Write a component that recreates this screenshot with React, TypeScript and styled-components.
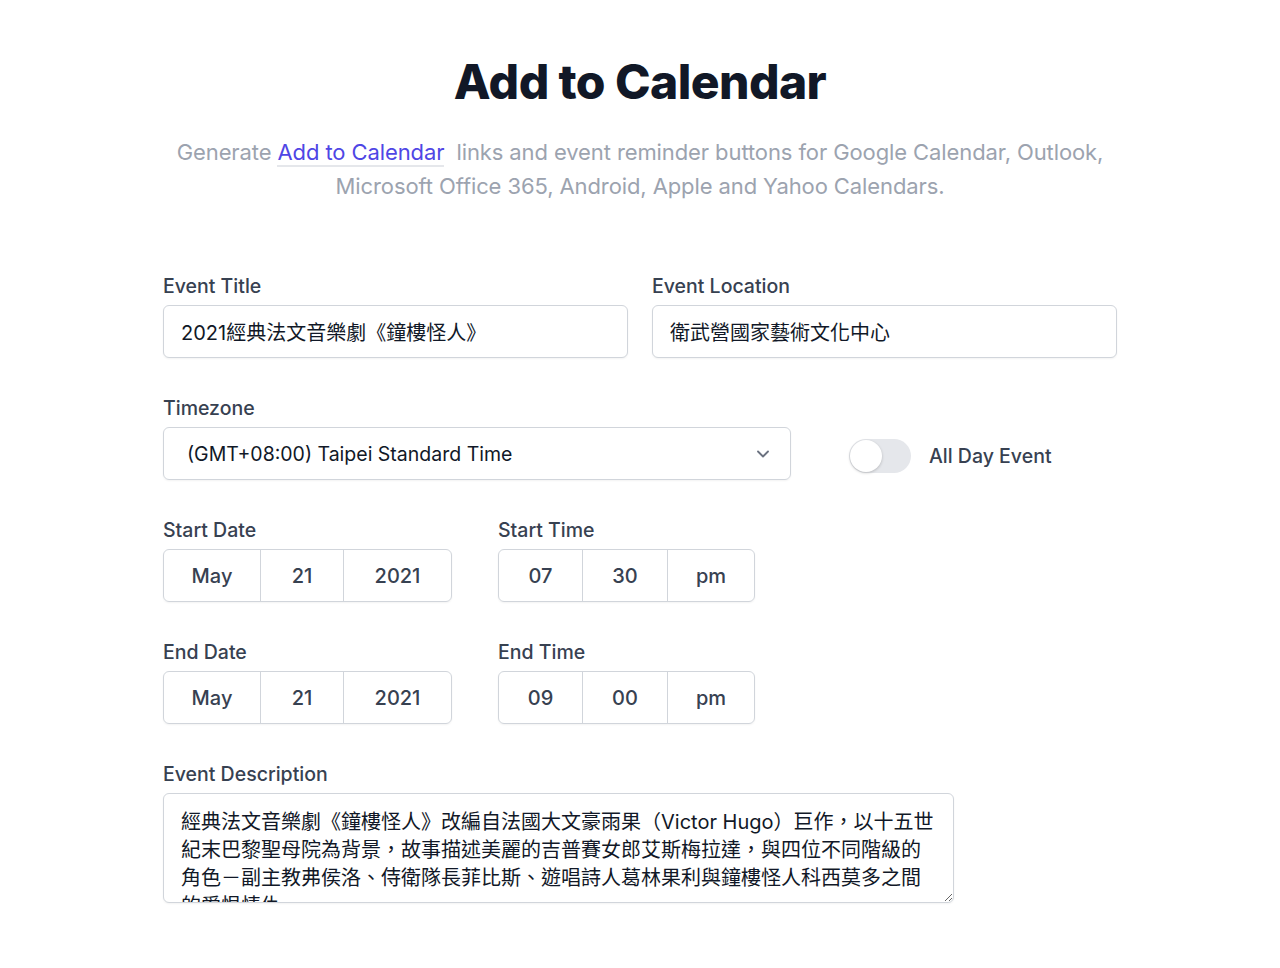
import styled, { createGlobalStyle } from 'styled-components';

const GlobalStyle = createGlobalStyle`
  body {
    margin: 0;
    background: #ffffff;
    font-family: Inter, "Noto Sans CJK TC", sans-serif;
    -webkit-font-smoothing: antialiased;
  }
`;

const description =
  '經典法文音樂劇《鐘樓怪人》改編自法國大文豪雨果（Victor Hugo）巨作，以十五世紀末巴黎聖母院為背景，故事描述美麗的吉普賽女郎艾斯梅拉達，與四位不同階級的角色－副主教弗侯洛、侍衛隊長菲比斯、遊唱詩人葛林果利與鐘樓怪人科西莫多之間的愛恨情仇。';

type Part = { value: string; width: number };

const dateParts: Part[] = [
  { value: 'May', width: 96 },
  { value: '21', width: 83 },
  { value: '2021', width: 108 },
];
const startTime: Part[] = [
  { value: '07', width: 83 },
  { value: '30', width: 85 },
  { value: 'pm', width: 87 },
];
const endTime: Part[] = [
  { value: '09', width: 83 },
  { value: '00', width: 85 },
  { value: 'pm', width: 87 },
];

const SegmentGroup = ({ parts }: { parts: Part[] }) => (
  <Segments>
    {parts.map((p, idx) => (
      <Segment key={idx} $width={p.width}>
        {p.value}
      </Segment>
    ))}
  </Segments>
);

const App = () => {
  return (
    <>
      <GlobalStyle />
      <Page>
        <Header>
          <Title>Add to Calendar</Title>
          <Subtitle>
            Generate <Link href="#">Add to Calendar</Link> links and event reminder buttons for
            Google Calendar, Outlook, Microsoft Office 365, Android, Apple and Yahoo Calendars.
          </Subtitle>
        </Header>

        <Form>
          <TwoCols>
            <Field>
              <Label>Event Title</Label>
              <TextInput defaultValue="2021經典法文音樂劇《鐘樓怪人》" />
            </Field>
            <Field>
              <Label>Event Location</Label>
              <TextInput defaultValue="衛武營國家藝術文化中心" />
            </Field>
          </TwoCols>

          <ZoneRow>
            <Field>
              <Label>Timezone</Label>
              <Select>
                <span>(GMT+08:00) Taipei Standard Time</span>
                <svg width="20" height="20" viewBox="0 0 24 24" fill="none" stroke="#6b7280" strokeWidth="2.2" strokeLinecap="round" strokeLinejoin="round">
                  <path d="M6 9l6 6 6-6" />
                </svg>
              </Select>
            </Field>
            <ToggleWrap>
              <Toggle>
                <Knob />
              </Toggle>
              <ToggleLabel>All Day Event</ToggleLabel>
            </ToggleWrap>
          </ZoneRow>

          <DateRow>
            <Field>
              <Label>Start Date</Label>
              <SegmentGroup parts={dateParts} />
            </Field>
            <Field>
              <Label>Start Time</Label>
              <SegmentGroup parts={startTime} />
            </Field>
          </DateRow>

          <DateRow>
            <Field>
              <Label>End Date</Label>
              <SegmentGroup parts={dateParts} />
            </Field>
            <Field>
              <Label>End Time</Label>
              <SegmentGroup parts={endTime} />
            </Field>
          </DateRow>

          <Field>
            <Label>Event Description</Label>
            <TextArea defaultValue={description} />
          </Field>
        </Form>
      </Page>
    </>
  );
};

const Page = styled.div`
  width: 954px;
  margin: 0 auto;
  padding: 58px 0 60px;
`;

const Header = styled.header`
  text-align: center;
`;

const Title = styled.h1`
  margin: 0;
  font-size: 48px;
  line-height: 48px;
  font-weight: 800;
  letter-spacing: -0.012em;
  color: #111827;
`;

const Subtitle = styled.p`
  margin: 29px -10px 0;
  font-size: 22px;
  line-height: 34px;
  letter-spacing: -0.1px;
  color: #9ca3af;
`;

const Link = styled.a`
  color: #4f46e5;
  text-decoration: none;
  border-bottom: 2px solid #e5e7eb;
  margin-right: 6px;
`;

const Form = styled.div`
  display: flex;
  flex-direction: column;
  gap: 36px;
  margin-top: 69px;
`;

const TwoCols = styled.div`
  display: grid;
  grid-template-columns: 1fr 1fr;
  gap: 24px;
`;

const Field = styled.div`
  display: flex;
  flex-direction: column;
`;

const Label = styled.label`
  font-size: 19.5px;
  line-height: 28px;
  font-weight: 500;
  color: #374151;
  margin-bottom: 5px;
`;

const TextInput = styled.input`
  box-sizing: border-box;
  height: 53px;
  padding: 0 17px;
  border: 1px solid #d1d5db;
  border-radius: 6px;
  box-shadow: 0 1px 2px rgba(0, 0, 0, 0.05);
  font-family: Inter, "Noto Sans CJK TC", sans-serif;
  font-size: 20px;
  color: #111827;
  outline: none;
`;

const ZoneRow = styled.div`
  display: flex;
  align-items: flex-end;
`;

const Select = styled.div`
  box-sizing: border-box;
  width: 628px;
  height: 53px;
  display: flex;
  align-items: center;
  justify-content: space-between;
  padding: 0 17px 0 23px;
  border: 1px solid #d1d5db;
  border-radius: 6px;
  box-shadow: 0 1px 2px rgba(0, 0, 0, 0.05);
  font-size: 19.5px;
  color: #111827;
`;

const ToggleWrap = styled.div`
  display: flex;
  align-items: center;
  gap: 18px;
  margin-left: 58px;
  height: 53px;
  padding-top: 4px;
  box-sizing: border-box;
`;

const Toggle = styled.div`
  width: 62px;
  height: 34px;
  border-radius: 17px;
  background: #e5e7eb;
  display: flex;
  align-items: center;
  padding: 0 1px;
  box-sizing: border-box;
`;

const Knob = styled.div`
  width: 32px;
  height: 32px;
  border-radius: 50%;
  background: #ffffff;
  box-shadow: 0 1px 3px rgba(0, 0, 0, 0.2);
`;

const ToggleLabel = styled.span`
  font-size: 19.5px;
  font-weight: 500;
  color: #374151;
`;

const DateRow = styled.div`
  display: flex;
  gap: 46px;
`;

const Segments = styled.div`
  display: flex;
  height: 53px;
  border: 1px solid #d1d5db;
  border-radius: 6px;
  box-shadow: 0 1px 2px rgba(0, 0, 0, 0.05);
  box-sizing: border-box;
`;

const Segment = styled.div<{ $width: number }>`
  width: ${(p) => p.$width}px;
  display: flex;
  align-items: center;
  justify-content: center;
  font-size: 20px;
  font-weight: 500;
  color: #374151;
  box-sizing: border-box;

  &:not(:first-child) {
    border-left: 1px solid #d1d5db;
  }
`;

const TextArea = styled.textarea`
  box-sizing: border-box;
  width: 791px;
  height: 110px;
  padding: 14px 17px 12px;
  border: 1px solid #d1d5db;
  border-radius: 6px;
  box-shadow: 0 1px 2px rgba(0, 0, 0, 0.05);
  font-family: Inter, "Noto Sans CJK TC", sans-serif;
  font-size: 20px;
  line-height: 28px;
  color: #111827;
  outline: none;
  overflow: hidden;
`;

export default App;
